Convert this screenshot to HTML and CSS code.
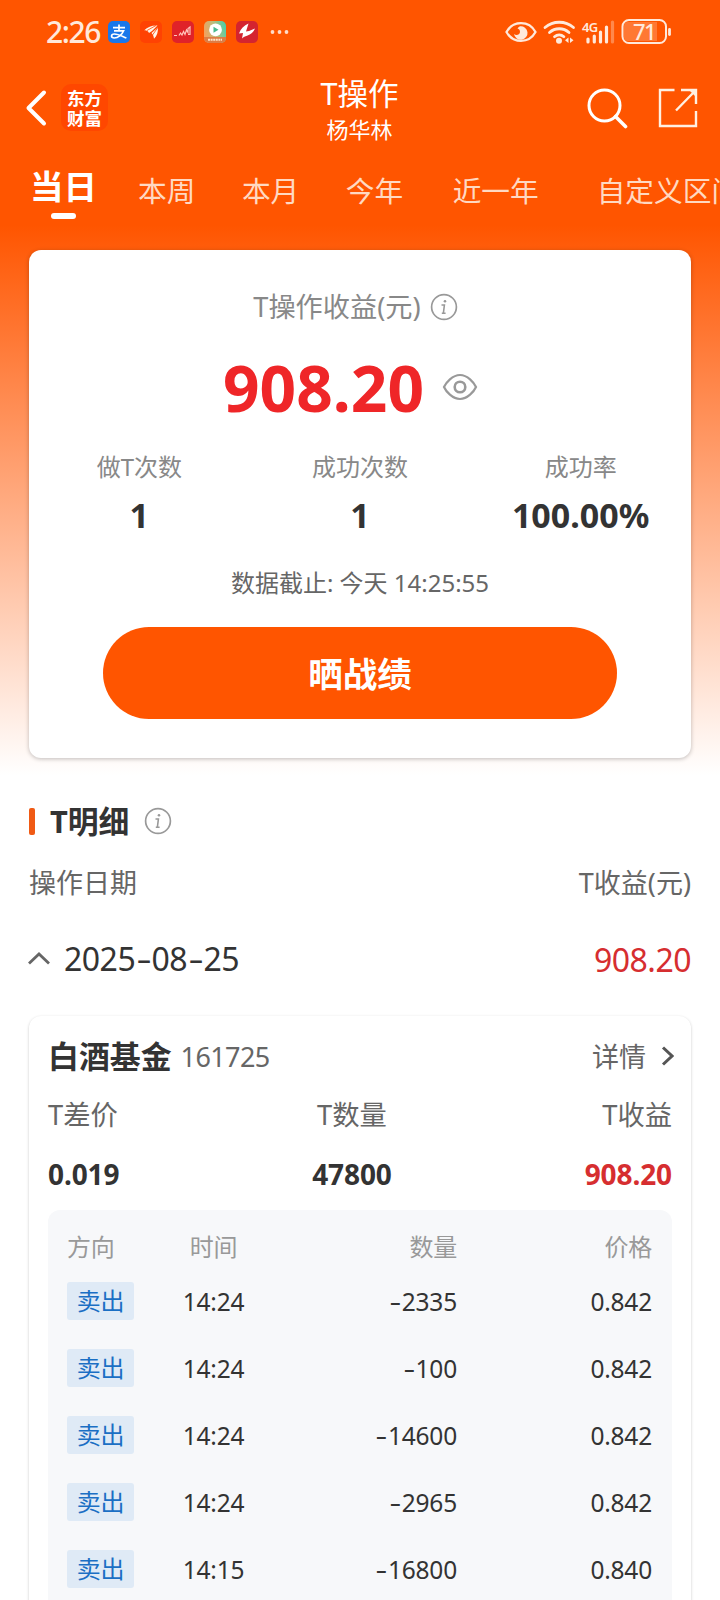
FILE: index.html
```html
<!DOCTYPE html>
<html lang="zh-CN">
<head>
<meta charset="utf-8">
<title>T操作</title>
<link rel="stylesheet" href="styles.css">
</head>
<body>
<svg width="0" height="0" class="defs">
  <symbol id="info" viewBox="0 0 28 28">
    <circle cx="14" cy="14" r="12.4" fill="none" stroke="#999" stroke-width="1.7"/>
    <circle cx="15" cy="8.2" r="1.3" fill="#999"/>
    <path d="M11.5 12h2.9l-1 8M11.8 20.2h3.8" fill="none" stroke="#999" stroke-width="1.6"/>
  </symbol>
</svg>
<div class="phone">
  <div class="status">
    <span class="clock">2:26</span>
    <div class="apps">
      <svg width="22" height="22" viewBox="0 0 22 22"><rect width="22" height="22" rx="5" fill="#1a77ea"/><path d="M5 6.600h12M11 3.600v6M6 9.800h9.600c-1.600 4-5.500 7.200-9.400 7.200-3.700 0-3.400-4 .2-4 4 0 7.600 2.300 12 4" fill="none" stroke="#fff" stroke-width="1.700"/></svg>
      <svg width="22" height="22" viewBox="0 0 22 22"><rect width="22" height="22" rx="5" fill="#ff4203"/><path d="M4 9.500C8 5.500 13 4 17.500 4.500L12 10 9 12C8 10 6 9 4 9.500zM11.500 12L17.800 6.500C18.300 11 17 15 14 17.800 13.800 15.500 13 13.500 11.500 12z" fill="#fff5e8"/><path d="M7 9.500L16 4.500M12.500 14L17.500 7" stroke="#ff4203" stroke-width=".8"/></svg>
      <svg width="22" height="22" viewBox="0 0 22 22"><rect width="22" height="22" rx="5" fill="#e02229"/><path d="M2 14.500h3M7 14.500l1.500-2.500 1.500 2 1.500-3.500 1.500 3 1.500-4.500 1.500 2.500V7.500l2-1.500v7.500h-2" fill="none" stroke="#ffc4bd" stroke-width="1.200"/></svg>
      <svg width="22" height="22" viewBox="0 0 22 22"><defs><linearGradient id="tv" x1="0" x2="1" y1=".6" y2=".3"><stop offset="0" stop-color="#f6a05c"/><stop offset=".5" stop-color="#bdbb7c"/><stop offset="1" stop-color="#4fd0a8"/></linearGradient></defs><rect width="22" height="22" rx="5" fill="url(#tv)"/><path d="M0 16h22v1a5 5 0 0 1-5 5H5a5 5 0 0 1-5-5z" fill="#dd7c45"/><circle cx="11.500" cy="8.800" r="6.400" fill="#fff"/><path d="M9.500 5.800l5 3-5 3z" fill="#46b98e"/><path d="M4 18.700h14" stroke="#ffe3c8" stroke-width="2" stroke-dasharray="2 .6"/></svg>
      <svg width="22" height="22" viewBox="0 0 22 22"><rect width="22" height="22" rx="5" fill="#d4242f"/><path d="M12.500 2.500C8 4.500 4.500 8 3 12.500l4-.5-1 5.500c1.500-1.500 3-2.200 5-2.800C15 13.500 17.500 11 19 7.500l-6 2.500-3 .5z" fill="#fff"/></svg>
    </div>
    <svg class="more" width="20" height="6" viewBox="0 0 20 6" fill="#ffdcc8"><circle cx="2.500" cy="3" r="1.900"/><circle cx="9.500" cy="3" r="1.900"/><circle cx="16.500" cy="3" r="1.900"/></svg>
    <svg class="sysicons" width="168" height="28" viewBox="0 0 168 28" fill="none" stroke="#ffe9db">
      <path d="M1.500 14C8 2.200 24 2.200 30.500 14 24 25.800 8 25.800 1.500 14z" stroke-width="2.300"/>
      <path d="M15 8.200a6.800 6.800 0 1 1-6 7.800c2 2 5.800 1 6-2 .1-2-.8-2.700-2.500-3.500.5-1 1.300-1.800 2.500-2.300z" fill="#ffe9db" stroke="none"/>
      <path d="M40 9.500c8-7 20.500-7 28.500 0M44.500 14.500c5.500-5 14-5 19.500 0M49.500 18.700c2.800-2.400 6.600-2.400 9.400 0" stroke-width="2.800" stroke-linecap="round"/>
      <circle cx="54" cy="22.700" r="3" fill="#ffe9db" stroke="none"/>
      <path d="M63.500 19.500v5.500l-3.500-2.700zM65 19.500v5.500l3.500-2.700z" fill="#ffe9db" stroke="none"/>
      <path d="M83 21v3M89.300 18v6M95.500 14v10M101.500 9v15" stroke-width="3.200" stroke-linecap="round"/>
      <path d="M107.500 4v20" stroke-width="3.200" stroke-linecap="round" opacity=".35"/>
      <rect x="117.500" y="2" width="43.500" height="23" rx="6.500" stroke-width="2"/>
      <path d="M123 4h29v19h-29a4 4 0 0 1-4-4V8a4 4 0 0 1 4-4z" fill="#ffe9db" opacity=".24" stroke="none"/>
      <path d="M164.500 11.500v5" stroke-width="2.800" stroke-linecap="round"/>
      <text x="77" y="14" class="net">4G</text>
      <text x="139" y="21.500" class="bat" text-anchor="middle">71</text>
    </svg>
  </div>

  <div class="nav">
    <div class="side">
      <svg width="24" height="38" viewBox="0 0 24 38"><path d="M20 3.500L4.500 19 20 34.500" fill="none" stroke="#fff" stroke-width="4" stroke-linecap="round" stroke-linejoin="round"/></svg>
      <div class="brand"><span>东方</span><span>财富</span></div>
    </div>
    <div class="heading"><div class="title">T操作</div><div class="user">杨华林</div></div>
    <div class="side end">
      <svg width="42" height="42" viewBox="0 0 42 42" fill="none" stroke="#fff" stroke-width="3"><circle cx="17.500" cy="18.500" r="15.500"/><path d="M28.500 29.500l10 10" stroke-width="3.600" stroke-linecap="round"/></svg>
      <svg width="40" height="40" viewBox="0 0 40 40" fill="none" stroke="#fff0e2" stroke-width="2.400"><path d="M16.500 2H2v36h36V23M23 2h15v14M37 3L18 22.500"/><path d="M31 2h7v7z" fill="#fff0e2" stroke="none"/></svg>
    </div>
  </div>

  <div class="tabs">
    <div class="tab on">当日</div><div class="tab">本周</div><div class="tab">本月</div><div class="tab">今年</div><div class="tab year">近一年</div><div class="tab">自定义区间</div>
  </div>

  <div class="card summary">
    <div class="caption">T操作收益(元)<svg width="28" height="28"><use href="#info"/></svg></div>
    <div class="profit"><span>908.20</span><svg width="36" height="28" viewBox="0 0 36 28" fill="none" stroke="#999" stroke-width="2.200"><path d="M2 14C4 9.500 10.500 2 18 2s14 7.500 16 12c-2 4.500-8.500 12-16 12S4 18.500 2 14z"/><circle cx="18" cy="14" r="5.300" stroke-width="2.600"/></svg></div>
    <div class="stats">
      <div><span class="k">做T次数</span><span class="v">1</span></div>
      <div><span class="k">成功次数</span><span class="v">1</span></div>
      <div><span class="k">成功率</span><span class="v">100.00%</span></div>
    </div>
    <div class="asof">数据截止: 今天 14:25:55</div>
    <div class="share">晒战绩</div>
  </div>

  <div class="section"><i></i><b>T明细</b><svg width="28" height="28"><use href="#info"/></svg></div>
  <div class="row labels"><span>操作日期</span><span>T收益(元)</span></div>
  <div class="row day">
    <div class="date"><svg width="24" height="15" viewBox="0 0 24 15"><path d="M2 11.500L12 2l10 9.500" fill="none" stroke="#666" stroke-width="2.800"/></svg><span>2025<em>-</em>08<em>-</em>25</span></div>
    <span class="red">908.20</span>
  </div>

  <div class="card fund">
    <div class="row name"><div><b>白酒基金</b><span class="code">161725</span></div><div class="detail">详情<svg width="14" height="22" viewBox="0 0 14 22"><path d="M3 2.500l9 8.500-9 8.500" fill="none" stroke="#555" stroke-width="3"/></svg></div></div>
    <div class="trio keys"><span>T差价</span><span>T数量</span><span>T收益</span></div>
    <div class="trio vals"><span>0.019</span><span>47800</span><span class="red">908.20</span></div>
    <div class="trades">
      <div class="trade head"><span>方向</span><span>时间</span><span>数量</span><span>价格</span></div>
      <div class="trade"><span class="tag">卖出</span><span>14:24</span><span><em>-</em>2335</span><span>0.842</span></div>
      <div class="trade"><span class="tag">卖出</span><span>14:24</span><span><em>-</em>100</span><span>0.842</span></div>
      <div class="trade"><span class="tag">卖出</span><span>14:24</span><span><em>-</em>14600</span><span>0.842</span></div>
      <div class="trade"><span class="tag">卖出</span><span>14:24</span><span><em>-</em>2965</span><span>0.842</span></div>
      <div class="trade"><span class="tag">卖出</span><span>14:15</span><span><em>-</em>16800</span><span>0.840</span></div>
    </div>
  </div>
</div>
</body>
</html>
```
FILE: styles.css
```css
* { box-sizing: border-box; }
body { margin: 0; font-family: "Noto Sans", "Noto Sans CJK SC", sans-serif; color: #333; background: #fff; }
svg { display: block; flex: none; }
em { display: inline-block; margin: 0 1.500px; font-style: normal; font-family: Inter, sans-serif; font-size: .94em; transform: scaleX(1.2); }
.defs { position: absolute; }
.phone { width: 720px; height: 1600px; overflow: hidden; background: linear-gradient(#ff5500 0, #ff5500 225px, #fff 775px, #fff 100%); }

.status { height: 64px; padding-left: 46px; display: flex; align-items: center; }
.clock { width: 62px; font-size: 30px; font-weight: 500; line-height: 64px; letter-spacing: -1.400px; color: #ffe9db; }
.apps { display: flex; gap: 10px; }
.more { margin-left: 12px; }
.sysicons { margin-left: 215px; margin-bottom: 1px; }
.net { font: 600 13px "Noto Sans", sans-serif; fill: #ffe9db; stroke: none; letter-spacing: -.8px; }
.bat { font: 500 22px "Noto Sans", sans-serif; fill: #ffe9db; stroke: none; letter-spacing: -1.500px; }

.nav { height: 86px; padding: 0 22px 0 24px; display: flex; justify-content: space-between; color: #fff; }
.side { width: 150px; height: 87px; display: flex; align-items: center; }
.end { justify-content: flex-end; gap: 29px; }
.brand { width: 47px; height: 47px; margin-left: 13px; padding-top: 4px; border-radius: 10px; background: #ff4700; text-align: center; font: 700 17.500px/20px "Noto Sans CJK SC", sans-serif; }
.brand span { display: block; }
.heading { text-align: center; padding-top: 9px; padding-right: 3px; }
.title { font-size: 30.500px; line-height: 40px; }
.user { font-size: 22px; line-height: 32px; }

.tabs { height: 100px; padding-left: 30px; display: flex; white-space: nowrap; }
.tab { font-size: 28.700px; line-height: 82px; margin-right: 46.500px; color: #ffd9c2; }
.tab.on { margin-right: 41px; font-size: 33.500px; font-weight: 700; line-height: 72px; color: #fff; }
.tab.on::after { content: ""; display: block; width: 25px; height: 6px; margin: -9px auto 0; border-radius: 3px; background: #fff; }
.tab.year { margin-left: 3px; margin-right: 58px; }

.card { margin: 0 29px; background: #fff; border-radius: 12px; box-shadow: 0 1px 4px rgba(0,0,0,.25); }
.summary { height: 508px; padding-top: 37px; }
.caption { display: flex; justify-content: center; align-items: center; gap: 9px; height: 40px; padding-right: 9px; font-size: 27.200px; line-height: 40px; color: #888; }
.profit { display: flex; justify-content: center; align-items: center; gap: 18px; height: 90px; margin-top: 16px; padding-left: 33px; padding-right: 52px; font-size: 64px; line-height: 90px; font-weight: 700; color: #ef2628; }
.profit svg { margin-bottom: 2px; }
.stats { display: grid; grid-template-columns: repeat(3, 1fr); text-align: center; margin-top: 14px; }
.stats span { display: block; }
.k { font-size: 24px; line-height: 40px; color: #888; }
.v { font-size: 34px; line-height: 56px; font-weight: 700; }
.asof { margin-top: 23px; text-align: center; font-size: 24px; line-height: 34px; color: #666; }
.share { width: 514px; height: 92px; margin: 27px auto 0; border-radius: 46px; background: #ff5500; color: #fff; text-align: center; font-size: 34.500px; line-height: 93px; font-weight: 700; }

.section { display: flex; align-items: center; height: 50px; margin: 38px 29px 0; }
.section i { width: 6px; height: 27px; border-radius: 2px; background: #f05a14; }
.section b { margin: 0 15px; font-size: 30.800px; line-height: 51px; }
.row { display: flex; justify-content: space-between; align-items: center; }
.labels { height: 50px; margin: 12px 29px 0; font-size: 27px; line-height: 50px; color: #666; }
.day { height: 60px; margin: 21px 29px 0; font-size: 32px; line-height: 61px; letter-spacing: -.5px; }
.date { display: flex; align-items: center; gap: 13px; margin-left: -2px; }
.red { color: #d62e30; }

.fund { height: 620px; margin-top: 27px; padding: 0 19px; box-shadow: 0 1px 3px rgba(0,0,0,.22); }
.name { height: 80px; }
.name > div { display: flex; align-items: center; }
.name b { font-size: 30.900px; line-height: 80px; }
.code { margin-left: 9px; font-size: 27px; letter-spacing: -.6px; color: #666; }
.name .detail { gap: 14px; margin: -1px -2px 0 0; font-size: 27px; color: #666; }
.trio { display: grid; grid-template-columns: 200px 1fr 216px; text-align: center; }
.trio :first-child { text-align: left; }
.trio :last-child { text-align: right; }
.keys { font-size: 27.300px; line-height: 41px; margin-top: -2px; color: #666; }
.vals { font-size: 28px; line-height: 40px; margin-top: 19px; letter-spacing: -.1px; font-weight: 700; }
.trades { margin-top: 16px; height: 420px; padding: 15px 20px 0 19px; border-radius: 12px; background: #f7f8fa; }
.trade { display: grid; grid-template-columns: 67px 133px 1fr 195px; align-items: center; height: 67px; font-size: 24.500px; text-align: right; letter-spacing: -.2px; }
.trade span:nth-child(2) { text-align: center; padding-left: 26px; }
.trade.head { height: 40px; font-size: 24px; color: #999; }
.trade.head + .trade { margin-top: 3px; }
.trade.head span:first-child { text-align: left; }
.trade .tag { height: 38px; margin-top: -1px; border-radius: 3px; background: #dfeaf6; color: #1b6fc4; text-align: center; font-size: 24px; line-height: 37px; }
```
